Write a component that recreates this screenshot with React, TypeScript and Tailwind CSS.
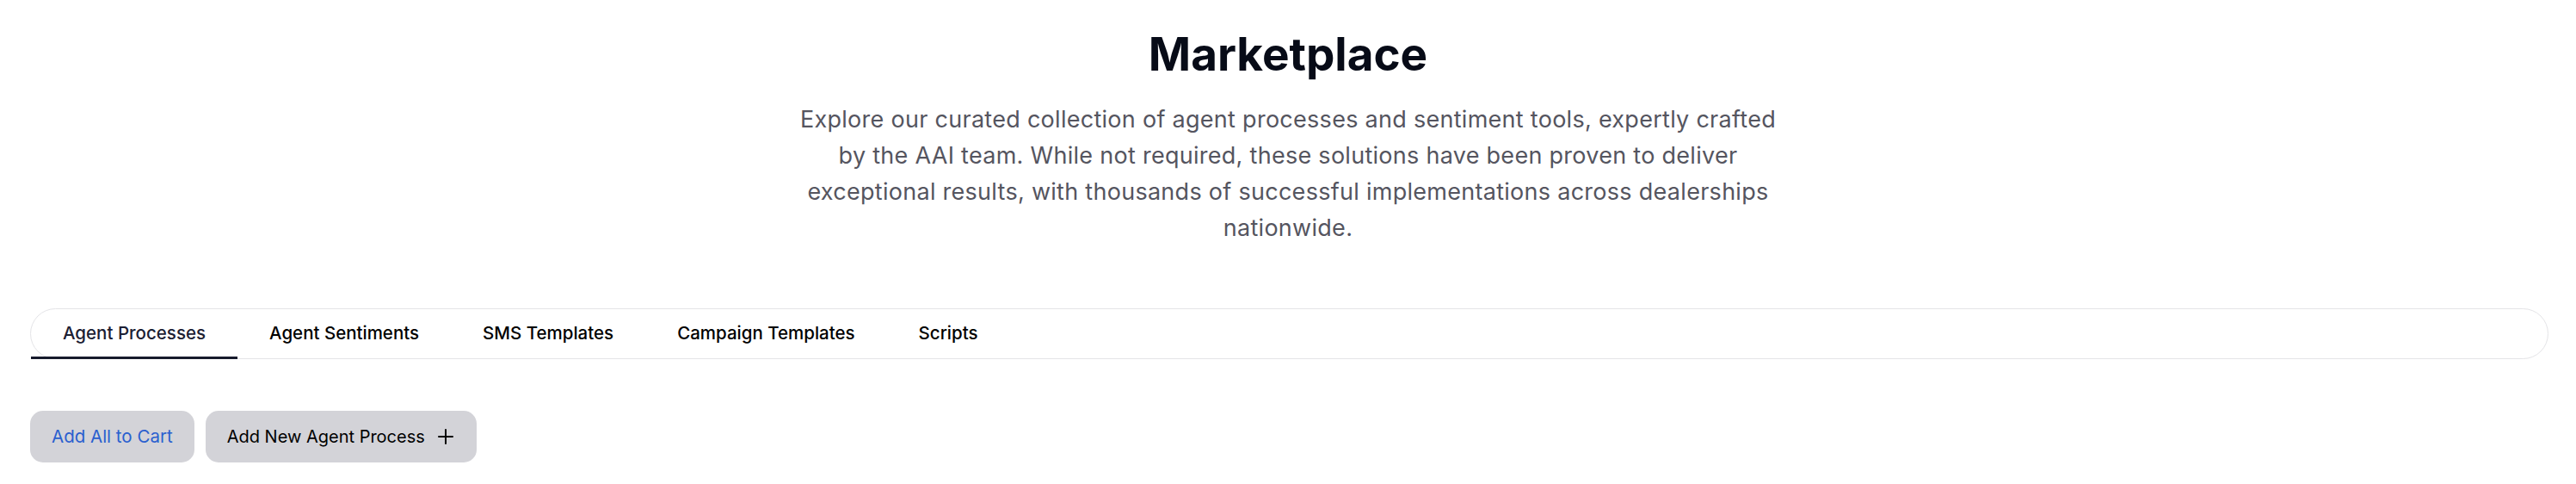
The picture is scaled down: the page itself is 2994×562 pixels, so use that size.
import React, { useState } from "react";

const tabs = [
  "Agent Processes",
  "Agent Sentiments",
  "SMS Templates",
  "Campaign Templates",
  "Scripts",
];

export default function App() {
  const [active, setActive] = useState(0);
  return (
    <div className="min-h-screen bg-white font-['Inter','Noto_Sans',sans-serif]">
      <header className="pt-[33px] text-center">
        <h1 className="text-[53px] leading-[60px] font-bold text-[#070b17]">
          Marketplace
        </h1>
        <p className="mx-auto mt-[25px] max-w-[1152px] text-[27px] leading-[42px] tracking-[0.28px] text-[#55555f]">
          Explore our curated collection of agent processes and sentiment tools, expertly crafted by the AAI team. While not required, these solutions have been proven to deliver exceptional results, with thousands of successful implementations across dealerships nationwide.
        </p>
      </header>

      <div className="mt-[72px] ml-[35px] mr-[32px]">
        <div className="flex h-[59px] items-stretch rounded-full border border-[#e4e4e7] bg-white">
          {tabs.map((t, i) => (
            <button
              key={t}
              onClick={() => setActive(i)}
              className={
                i === active
                  ? "relative px-[37px] text-[20.5px] font-medium text-[#1c2033]"
                  : "relative px-[37px] text-[20.5px] font-medium text-black"
              }
            >
              {t}
              {i === active && (
                <span className="absolute left-0 right-0 bottom-[-1px] h-[3px] bg-[#161a2c]" />
              )}
            </button>
          ))}
        </div>
      </div>

      <div className="mt-[60px] ml-[35px] flex gap-[13px]">
        <button className="h-[60px] rounded-[15px] bg-[#d3d3d8] px-[25px] text-[20.5px] text-[#2a5fcf]">
          Add All to Cart
        </button>
        <button className="flex h-[60px] items-center rounded-[15px] bg-[#d3d3d8] pl-[25px] pr-[27px] text-[20px] text-black">
          Add New Agent Process
          <svg
            className="ml-[15px]"
            width="18"
            height="18"
            viewBox="0 0 18 18"
            fill="none"
            stroke="currentColor"
            strokeWidth="2"
            strokeLinecap="round"
          >
            <line x1="9" y1="1" x2="9" y2="17" />
            <line x1="1" y1="9" x2="17" y2="9" />
          </svg>
        </button>
      </div>
    </div>
  );
}
